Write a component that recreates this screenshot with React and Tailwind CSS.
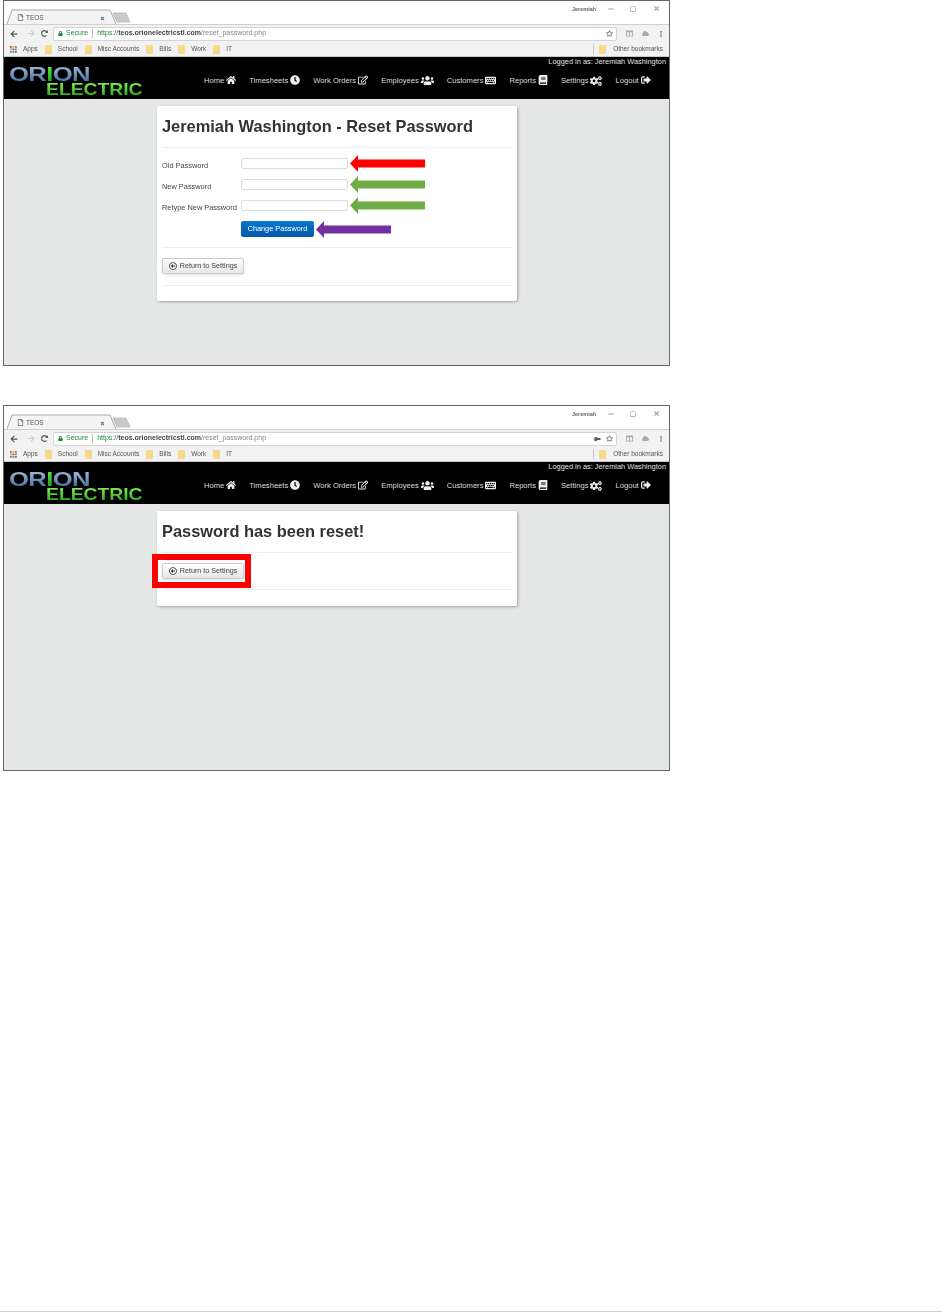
import React from "react";
import { FaHome, FaClock, FaRegEdit, FaUsers, FaKeyboard, FaBook, FaCogs, FaSignOutAlt, FaRegArrowAltCircleLeft, FaKey, FaRegStar, FaLock, FaRegFile, FaCloud, FaEllipsisV, FaArrowLeft, FaArrowRight, FaRedoAlt, FaTimes, FaRegSquare, FaMinus, FaColumns } from "react-icons/fa";

const nav = [
  ["Home", FaHome, 10],
  ["Timesheets", FaClock, 10],
  ["Work Orders", FaRegEdit, 10],
  ["Employees", FaUsers, 13],
  ["Customers", FaKeyboard, 11],
  ["Reports", FaBook, 10],
  ["Settings", FaCogs, 12],
  ["Logout", FaSignOutAlt, 10],
];

const marks = ["School", "Misc Accounts", "Bills", "Work", "IT"];
const dots = ["#d44", "#e5a33b", "#3a7", "#e5a33b", "#c44", "#48c", "#3a7", "#48c", "#d44"];

function Folder() {
  return <span className="block h-[9px] w-[7px] rounded-[1px] bg-[#f6da8a]" />;
}

function Arrow({ className, color, width }) {
  const w = width;
  return (
    <svg className={className} width={w} height="17" viewBox={`0 0 ${w} 17`}>
      <polygon fill={color} points={`0,8.5 8,0 8,4.5 ${w},4.5 ${w},12.5 8,12.5 8,17`} />
    </svg>
  );
}

function Chrome({ saved }) {
  return (
    <div className="bg-[#f2f2f2] text-[#555]">
      <div className="relative h-[23px] bg-white">
        <svg className="absolute left-[3px] top-[8px]" width="130" height="16" viewBox="0 0 130 16">
          <path d="M0 15 L5 1 H103 L109 15" fill="#f4f4f4" stroke="#a8a8a8" strokeWidth="1" />
          <path d="M106 4 H119 L123 13 H110 Z" fill="#c9c9c9" stroke="#b5b5b5" strokeWidth="0.7" />
        </svg>
        <FaRegFile className="absolute left-[13px] top-[13px] text-[#666]" size={7} />
        <span className="absolute left-[22px] top-[13px] text-[6.5px] leading-[8px]">TEOS</span>
        <FaTimes className="absolute left-[96px] top-[15px] text-[#666]" size={5} />
        <span className="absolute left-[568px] top-[4px] text-[5.5px] font-bold leading-[8px] text-[#666]">Jeremiah</span>
        <FaMinus className="absolute left-[604px] top-[5px] text-[#999]" size={6} />
        <FaRegSquare className="absolute left-[626px] top-[5px] text-[#999]" size={6} />
        <FaTimes className="absolute left-[649px] top-[4px] text-[#aaa]" size={7} />
      </div>
      <div className="flex h-[18px] items-center border-t border-[#d0d0d0] pl-[6px] pr-[5px]">
        <FaArrowLeft className="text-[#555]" size={8} />
        <FaArrowRight className="ml-[10px] text-[#ccc]" size={7} />
        <FaRedoAlt className="ml-[6px] text-[#555]" size={7} />
        <div className="ml-[5px] flex h-[14px] flex-1 items-center rounded-[2px] border border-[#d4d4d4] bg-white pl-[4px] pr-[3px] text-[7px]">
          <FaLock className="text-[#1c8a3c]" size={5} />
          <span className="ml-[3px] text-[#1c8a3c]">Secure</span>
          <span className="mx-[4px] h-[9px] w-px bg-[#bbb]" />
          <span className="text-[#1c8a3c]">https://</span>
          <span className="font-bold text-[#444]">teos.orionelectricstl.com</span>
          <span className="text-[#888]">/reset_password.php</span>
          <span className="flex-1" />
          {saved && <FaKey className="mr-[6px] rotate-[225deg] text-[#555]" size={6} />}
          <FaRegStar className="text-[#555]" size={7} />
        </div>
        <FaColumns className="ml-[9px] text-[#aaa]" size={7} />
        <FaCloud className="ml-[9px] text-[#aaa]" size={7} />
        <FaEllipsisV className="ml-[9px] text-[#666]" size={6} />
      </div>
      <div className="flex h-[15px] items-center border-b border-[#c8c8c8] pl-[6px] pr-[6px] text-[6.5px]">
        <svg width="7" height="7" viewBox="0 0 7 7">
          {dots.map((c, i) => (
            <rect key={i} x={(i % 3) * 2.5} y={Math.floor(i / 3) * 2.5} width="1.8" height="1.8" fill={c} />
          ))}
        </svg>
        <span className="ml-[6px]">Apps</span>
        {marks.map((m) => (
          <React.Fragment key={m}>
            <span className="ml-[7px]"><Folder /></span>
            <span className="ml-[6px]">{m}</span>
          </React.Fragment>
        ))}
        <span className="flex-1" />
        <span className="mr-[5px] h-[10px] w-px bg-[#ccc]" />
        <Folder />
        <span className="ml-[7px]">Other bookmarks</span>
      </div>
    </div>
  );
}

function Navbar() {
  return (
    <div className="relative h-[42px] bg-black text-white">
      <div className="absolute left-[5px] top-[8px] font-bold">
        <div className="flex h-[18px] origin-left scale-x-[1.22] text-[21px] leading-[18px] tracking-[-0.5px]">
          <span className="block bg-gradient-to-b from-[#a4bfdc] to-[#3f6a9a] bg-clip-text text-transparent">OR</span>
          <span className="block bg-gradient-to-b from-[#5ee84a] to-[#14a01c] bg-clip-text text-transparent">I</span>
          <span className="block bg-gradient-to-b from-[#a4bfdc] to-[#3f6a9a] bg-clip-text text-transparent">ON</span>
        </div>
        <div className="ml-[37px] h-[13px] origin-left scale-x-[1.17] bg-gradient-to-b from-[#7cec4a] to-[#1fae1f] bg-clip-text text-[16.5px] leading-[13px] text-transparent">ELECTRIC</div>
      </div>
      <div className="absolute right-[3px] top-0 text-[7.4px] leading-[9px] text-[#e0e0e0]">Logged in as: Jeremiah Washington</div>
      <div className="flex h-full items-center gap-[13px] pl-[200px] pt-[5px] text-[7.6px] text-[#dcdcdc]">
        {nav.map(([label, Icon, size]) => (
          <span key={label} className="flex items-center gap-[2px] whitespace-nowrap">
            {label}
            <Icon size={size} className="text-[#eee]" />
          </span>
        ))}
      </div>
    </div>
  );
}

function ReturnButton() {
  return (
    <button className="flex h-[16px] w-[82px] items-center justify-center gap-[3px] rounded-[2px] border border-[#ccc] bg-gradient-to-b from-white to-[#e6e6e6] text-[7.2px] text-[#444] shadow-sm">
      <FaRegArrowAltCircleLeft size={8} className="text-[#333]" />
      Return to Settings
    </button>
  );
}

function Rule() {
  return <div className="h-px bg-[#efefef]" />;
}

function Row({ label }) {
  return (
    <div className="flex h-[21px] items-start">
      <span className="w-[79px] whitespace-nowrap pt-[3px] text-[7.4px] leading-[10px] text-[#444]">{label}</span>
      <span className="h-[11px] w-[107px] rounded-[2px] border border-[#dcdcdc] bg-white" />
    </div>
  );
}

function Window({ children, saved, className = "" }) {
  return (
    <div className={`ml-[3px] w-[667px] overflow-hidden border border-[#666] ${className}`}>
      <div className="blur-[0.4px] [will-change:filter]">
        <Chrome saved={saved} />
        <Navbar />
        <div className="h-[266px] bg-[#e5e8e7] pl-[153px] pt-[7px]">
          <div className="w-[360px] rounded-[2px] bg-white px-[5px] shadow-[1px_1px_3px_rgba(0,0,0,0.3)]">
            {children}
          </div>
        </div>
      </div>
    </div>
  );
}

export default function App() {
  return (
    <div className="relative h-[1312px] w-[942px] overflow-hidden bg-white font-['Liberation_Sans',Arial,sans-serif]">
      <Window>
        <h1 className="h-[41px] pt-[10px] text-[16.4px] font-bold leading-[20px] text-[#333]">Jeremiah Washington - Reset Password</h1>
        <Rule />
        <div className="pt-[10px]">
          <Row label="Old Password" />
          <Row label="New Password" />
          <Row label="Retype New Password" />
          <button className="ml-[79px] block h-[16px] w-[73px] rounded-[2px] bg-gradient-to-b from-[#0a7ad0] to-[#0657a8] text-[7.3px] text-white">Change Password</button>
        </div>
        <div className="h-[10px]" />
        <Rule />
        <div className="py-[10px]"><ReturnButton /></div>
        <div className="h-px" />
        <Rule />
        <div className="h-[15px]" />
      </Window>
      <Window saved className="mt-[39px]">
        <h1 className="h-[41px] pt-[10px] text-[16.4px] font-bold leading-[20px] text-[#333]">Password has been reset!</h1>
        <Rule />
        <div className="py-[10px]"><ReturnButton /></div>
        <Rule />
        <div className="h-[16px]" />
      </Window>

      <Arrow className="absolute left-[350px] top-[155px]" color="#ff0000" width={75} />
      <Arrow className="absolute left-[350px] top-[176px]" color="#70ad47" width={75} />
      <Arrow className="absolute left-[350px] top-[197px]" color="#70ad47" width={75} />
      <Arrow className="absolute left-[316px] top-[221px]" color="#7030a0" width={75} />
      <div className="absolute left-[152px] top-[554px] h-[34px] w-[99px] border-[6px] border-[#ff0000]" />
      <div className="absolute bottom-0 left-0 h-px w-full bg-[#d0d0d0]" />
    </div>
  );
}
